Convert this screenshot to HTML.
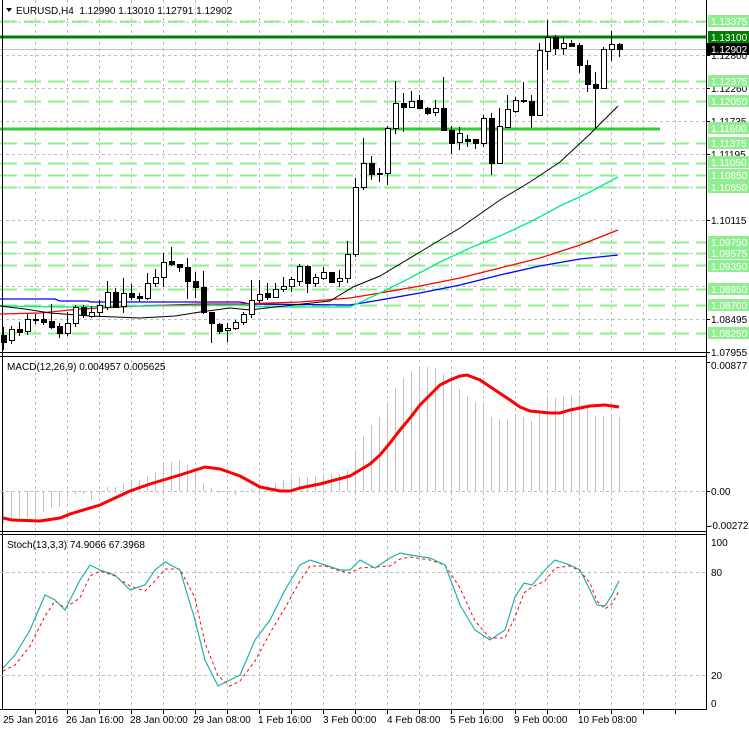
<!DOCTYPE html>
<html><head><meta charset="utf-8"><style>
html,body{margin:0;padding:0;background:#fff;width:749px;height:731px;overflow:hidden}
svg{display:block}
text{font-family:"Liberation Sans",sans-serif;font-size:10px}
</style></head><body>
<svg id="s" width="749" height="731" xmlns="http://www.w3.org/2000/svg"></svg>
<script>
var o=[];
function L(x1,y1,x2,y2,c,w,d){o.push('<line x1="'+x1+'" y1="'+y1+'" x2="'+x2+'" y2="'+y2+'" stroke="'+c+'" stroke-width="'+(w||1)+'"'+(d?' stroke-dasharray="'+d+'"':'')+' shape-rendering="crispEdges"/>');}
function P(pts,c,w,d){o.push('<polyline fill="none" stroke="'+c+'" stroke-width="'+(w||1)+'"'+(d?' stroke-dasharray="'+d+'"':'')+' points="'+pts.map(function(p){return p.join(",")}).join(" ")+'"/>');}
function T(x,y,s,c,a){o.push('<text x="'+x+'" y="'+y+'" fill="'+(c||'#000')+'"'+(a?' '+a:'')+'>'+s+'</text>');}
var R=706;
// vertical grid
for(var x=35;x<R;x+=32){L(x+.5,0,x+.5,709,'#c0c0c0',1,'3,3');}
// horizontal gray grid main
for(var y=22;y<352;y+=33){L(0,y+.5,R,y+.5,'#c0c0c0',1,'3,3');}
// green dashed levels
[21,81,101,143,163,175,187,242,253,265,289,305,333].forEach(function(y){L(0,y+.5,R,y+.5,'#90ee90',2,'17,7');});
L(0,37,R,37,'#008000',3);
L(0,129,660,129,'#32cd32',3);
L(0,49.5,R,49.5,'#c0c0c0',1);
// MAs
P([[0,299],[55,299],[60,301],[88,301],[90,302],[240,302],[250,304],[350,305],[380,300],[420,293],[460,285],[500,275],[540,266],[580,259],[618,255]],'#0000ff',1.3);
P([[0,314],[40,313],[80,309],[100,308],[140,306],[200,304],[240,304],[300,302],[350,298],[380,293],[420,286],[460,278],[500,268],[540,258],[580,245],[618,230]],'#ff0000',1.3);
P([[0,306],[60,307],[150,306],[240,305],[270,307],[350,307],[365,300],[380,293],[410,278],[440,262],[470,248],[500,236],[530,222],[560,206],[590,192],[618,177]],'#00ee88',1.3);
P([[0,306],[25,309],[50,313],[90,316],[140,318],[175,316],[200,312],[230,308],[250,310],[275,307],[330,301],[353,287],[380,276],[420,252],[460,228],[500,200],[530,182],[560,162],[590,134],[618,106]],'#000',1);
// candles [top,bot,hi,lo,white]
var C=[[335,342,327,350,0],[329,340,326,344,1],[329,332,322,336,0],[319,331,314,335,1],[319,320,314,324,1],[319,322,312,325,0],[321,327,304,329,0],[326,333,323,338,0],[323,333,312,336,1],[307,323,305,327,1],[307,315,305,318,0],[312,316,306,318,1],[305,312,300,317,1],[292,307,281,310,1],[292,307,288,308,0],[293,306,278,313,1],[293,297,284,300,0],[296,298,293,302,0],[283,298,273,300,1],[277,283,269,287,1],[262,277,253,287,1],[261,264,247,266,0],[264,267,264,272,0],[267,281,258,299,0],[281,287,272,298,0],[287,312,271,314,0],[312,323,312,343,0],[324,331,323,334,0],[328,330,323,342,1],[322,328,320,330,1],[314,322,312,325,1],[300,314,280,318,1],[294,300,280,303,1],[293,297,283,300,0],[289,297,283,298,1],[286,289,277,292,1],[279,286,277,292,1],[266,281,264,286,1],[266,283,265,293,0],[277,283,274,287,1],[272,278,267,280,1],[272,282,272,282,0],[278,281,270,287,1],[254,278,241,283,1],[187,254,178,257,1],[163,187,138,190,1],[163,174,156,180,0],[173,174,168,182,0],[128,173,126,185,1],[103,128,81,134,1],[103,107,93,132,0],[101,107,91,107,1],[100,108,95,108,0],[108,113,107,115,0],[108,112,100,116,1],[108,130,77,130,0],[130,143,126,154,0],[133,142,127,150,1],[139,141,135,147,0],[139,143,139,149,0],[118,143,115,147,1],[118,163,113,175,0],[126,163,108,163,1],[109,127,95,128,1],[100,111,97,113,1],[100,101,82,103,0],[101,115,95,128,0],[50,115,43,115,1],[37,51,20,70,1],[37,48,35,55,0],[43,48,37,55,1],[43,46,40,47,0],[45,65,43,73,0],[65,84,60,92,0],[84,88,72,129,0],[49,88,47,89,1],[44,49,31,61,1],[44,49,43,57,0]];
C.forEach(function(c,i){var x=3+8*i;L(x+.5,c[2],x+.5,c[3],'#000',1);
o.push('<rect x="'+(x-2)+'.5" y="'+c[0]+'.5" width="5" height="'+Math.max(c[1]-c[0],1)+'" fill="'+(c[4]?'#fff':'#000')+'" stroke="#000" stroke-width="1" shape-rendering="crispEdges"/>');});
// panel borders
o.push('<rect x="0" y="352" width="749" height="5" fill="#fff"/>');
L(0,352.5,R,352.5,'#000');L(0,356.5,R,356.5,'#000');
L(0,531.5,R,531.5,'#000');L(0,534.5,R,534.5,'#000');
L(0,709.5,R,709.5,'#000');
L(2.5,0,2.5,710,'#000');L(R+.5,0,R+.5,710,'#000');
for(var x=35;x<R;x+=32){L(x+.5,709,x+.5,714,'#000');}
// MACD
L(0,491.5,R,491.5,'#c0c0c0',1,'3,3');
var H=[523,518,518,518,515,512,508,507,497,494,494,500,495,487,487,483,481,480,476,472,465,462,460,465,470,483,488,493,495,495,490,489,487,485,483,480,478,477,477,476,475,474,474,470,452,436,425,417,403,388,378,371,368,367,368,374,376,389,396,402,404,417,419,419,417,417,421,413,399,398,396,395,395,407,416,416,416,417];
H.forEach(function(h,i){var x=3+8*i;L(x+.5,491,x+.5,h,'#c0c0c0',1);});
P([[3,518],[12,520],[40,521],[60,518],[70,514],[100,505],[130,491],[150,484],[180,475],[205,467],[220,469],[240,476],[260,487],[280,491],[290,491],[300,488],[320,484],[350,476],[360,470],[370,464],[380,455],[390,443],[400,430],[410,418],[420,405],[430,395],[440,385],[450,380],[460,376],[467,375],[480,380],[495,390],[510,400],[520,407],[530,411],[550,413],[560,413],[570,410],[580,408],[590,406],[605,405],[612,406],[619,407]],'#ff0000',3);
// Stoch
L(0,572.5,R,572.5,'#c0c0c0',1,'3,3');L(0,675.5,R,675.5,'#c0c0c0',1,'3,3');
var S=[[3,668],[15,655],[30,630],[45,595],[55,600],[65,610],[80,580],[90,565],[100,570],[115,575],[130,590],[145,585],[155,570],[165,562],[180,570],[195,620],[205,660],[218,686],[230,680],[240,675],[255,640],[270,620],[285,590],[300,565],[310,560],[325,565],[340,570],[350,570],[360,560],[375,568],[390,558],[400,553],[410,555],[430,558],[445,565],[460,605],[475,630],[490,640],[505,630],[515,597],[524,583],[532,585],[545,570],[555,560],[570,565],[580,570],[590,590],[597,605],[605,606],[612,595],[619,581]];
var G=S.map(function(p,i){var q=S[Math.max(i-1,0)];return [p[0],Math.round((p[1]+q[1])/2+3)];});
P(G,'#ff0000',1,'3,3');
P(S,'#20b2aa',1.2);
// labels
o.push('<path d="M6 8 L12 8 L9 12 Z" fill="#000"/>');
T(16,14,'EURUSD,H4&#160;&#160;1.12990 1.13010 1.12791 1.12902');
T(7,370,'MACD(12,26,9) 0.004957 0.005625');
T(7,548,'Stoch(13,3,3) 74.9066 67.3968');
// right axis gray labels
[[55,'1.12800'],[88,'1.12260'],[121,'1.11735'],[154,'1.11195'],[220,'1.10115'],[319,'1.08495'],[352,'1.07955']].forEach(function(a){L(R,a[0]+.5,R+4,a[0]+.5,'#000');T(711,a[0]+4,a[1]);});
[[21,'1.13375'],[81,'1.12375'],[101,'1.12050'],[128,'1.11600'],[143,'1.11375'],[162,'1.11050'],[175,'1.10850'],[187,'1.10650'],[242,'1.09750'],[253,'1.09575'],[266,'1.09350'],[289,'1.08950'],[305,'1.08700'],[333,'1.08250']].forEach(function(a){o.push('<rect x="708" y="'+(a[0]-6)+'" width="41" height="12" fill="#90ee90"/>');T(711,a[0]+4,a[1],'#fff');});
o.push('<rect x="708" y="31" width="41" height="12" fill="#008000"/>');T(711,41,'1.13100','#fff');
o.push('<rect x="707" y="43" width="42" height="12" fill="#000"/>');T(711,53,'1.12902','#fff');
T(711,369,'0.00877');T(711,495,'0.00');T(709,529,'-0.002723');
L(R,362.5,R+4,362.5,'#000');L(R,491.5,R+4,491.5,'#000');L(R,526.5,R+4,526.5,'#000');
T(711,546,'100');T(711,576,'80');T(711,679,'20');T(711,707,'0');
[['25 Jan 2016',3],['26 Jan 16:00',66],['28 Jan 00:00',130],['29 Jan 08:00',193],['1 Feb 16:00',258],['3 Feb 00:00',323],['4 Feb 08:00',387],['5 Feb 16:00',450],['9 Feb 00:00',514],['10 Feb 08:00',578]].forEach(function(a){T(a[1],723,a[0]);});
document.getElementById('s').innerHTML=o.join('');
</script>
</body></html>
